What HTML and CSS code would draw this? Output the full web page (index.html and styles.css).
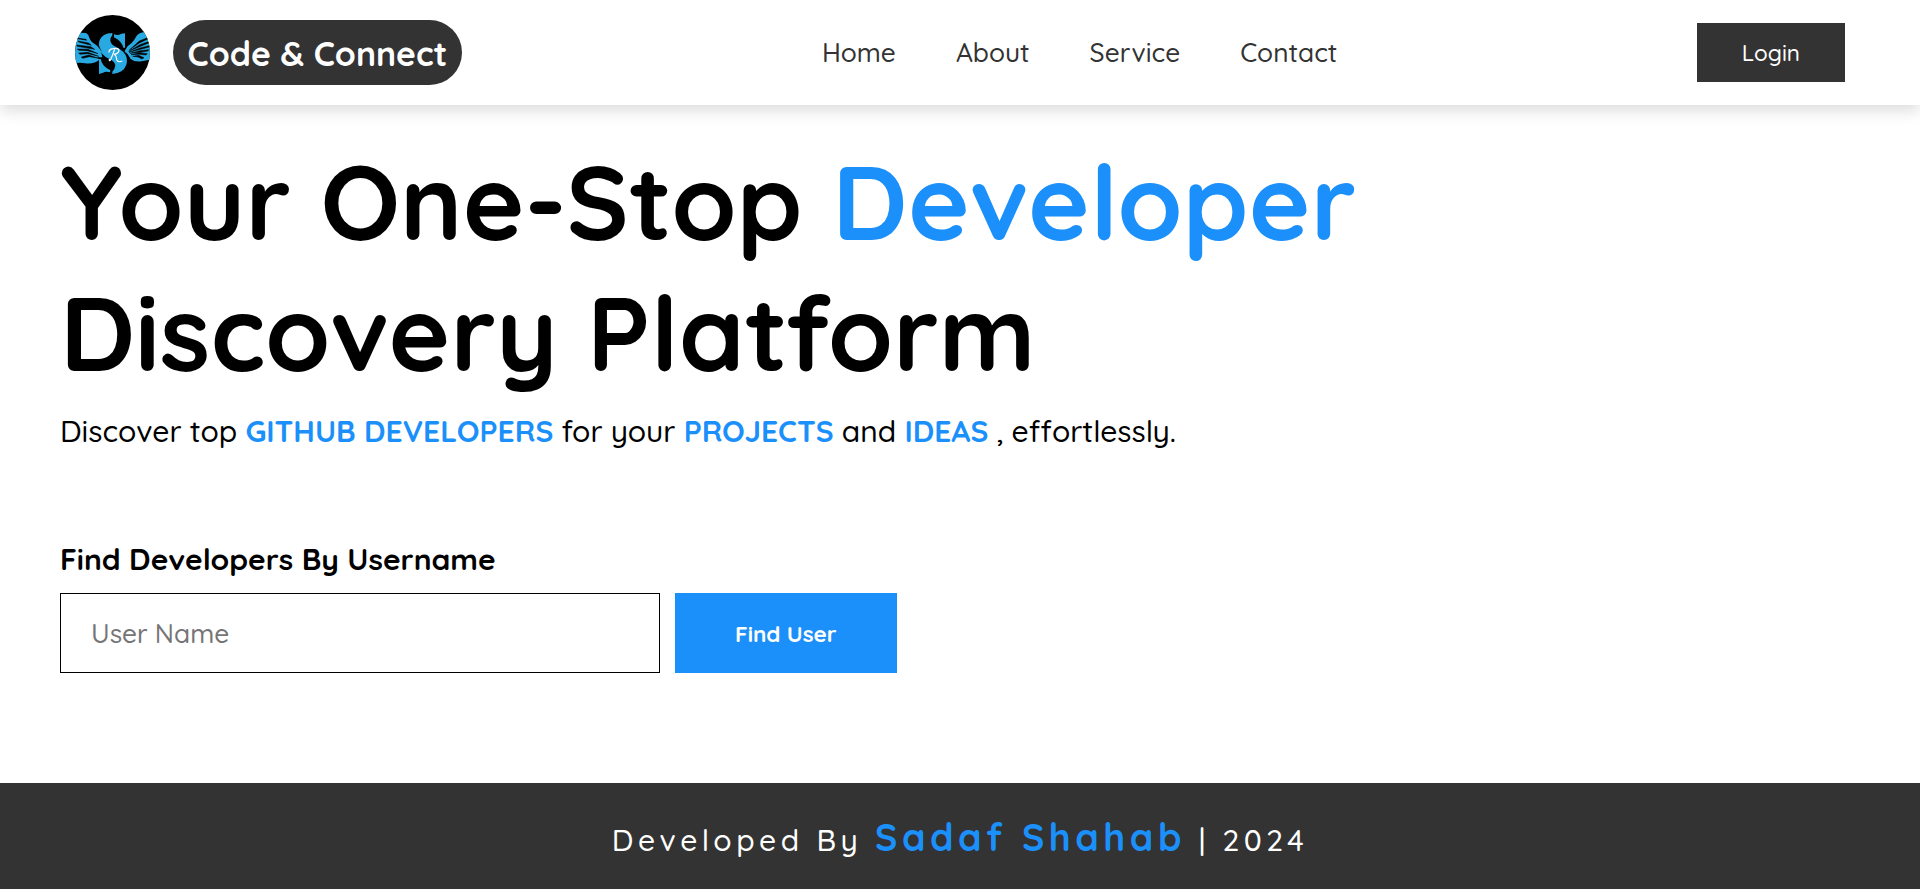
FILE: index.html
```html
<!DOCTYPE html>
<html lang="en">
<head>
<meta charset="utf-8">
<title>Code &amp; Connect</title>
<link rel="stylesheet" href="styles.css">
</head>
<body>
<header class="header">
  <div class="brand">
    <svg class="brand-logo" viewBox="45 44 225 225" aria-hidden="true">
      <defs><clipPath id="disc"><circle cx="157.500" cy="156.500" r="112.500"/></clipPath></defs>
      <g clip-path="url(#disc)">
        <rect x="45" y="44" width="225" height="225" fill="#000"/>
        <g fill="#29a9e1">
          <path d="M44 100 L62 97 L78 98 Q86 102 88 112 Q92 124 106 132 Q118 140 123 153 L127 171 L112 171 L118 179 L106 186 Q92 191 76 189 L60 187 L44 189Z"/>
          <path d="M271 97 L250 96 Q236 98 229 108 Q224 119 214 129 Q202 136 196 148 L194 154 L202 160 L206 166 L212 176 Q224 186 245 183 L271 178Z"/>
          <path d="M157 98 L157 105 Q151 111 151 121 Q153 133 170 141 Q194 153 200 172 Q205 197 184 213 Q174 220 157 221 L157 214 Q165 206 166 195 Q164 183 148 176 Q122 163 117 142 Q113 116 132 104 Q142 98 157 98Z"/>
          <path d="M162 102 Q174 107 184 100 L195 99 L195 142 L190 142 Q185 123 166 113 L162 111Z"/>
          <path d="M117 176 L122 176 Q126 195 143 205 L151 209 L150 216 Q137 212 129 217 L117 221Z"/>
        </g>
        <path d="M52 113L78 117L80 120L52 115ZM54 122L86 128L94 135L56 125ZM50 134L92 139L104 147L52 138ZM52 146L84 147L114 160L82 151L56 150ZM56 158L84 156L116 168L84 160L60 162ZM64 170L86 164L116 174L88 169L68 174Z" fill="#000" stroke="#000" stroke-width="1.500"/>
        <path d="M268 110L238 122L208 149L238 128L268 114ZM268 123L240 133L206 153L242 138L268 127ZM268 136L240 143L207 156L242 147L268 140ZM266 148L240 151L210 159L240 156L264 152ZM262 160L238 157L213 163L238 162L258 164ZM252 172L236 165L218 168L234 170L246 176Z" fill="#000" stroke="#000" stroke-width="1.500"/>
        <path d="M112 120L119 141L126 156L114 138L98 124Z" fill="#000"/>
        <path d="M147 157Q146 147 159 145Q175 142 177 150Q176 160 162 162M164 146Q158 166 151 180Q147 184 148 176M162 162Q169 165 170 178Q174 188 187 182" fill="none" stroke="#fff" stroke-width="3.500"/>
      </g>
    </svg>
    <span class="brand-name">Code &amp; Connect</span>
  </div>
  <nav class="nav">
    <a>Home</a>
    <a>About</a>
    <a>Service</a>
    <a>Contact</a>
  </nav>
  <button class="login">Login</button>
</header>
<main class="hero">
  <h1 class="title">Your One-Stop <span class="accent">Developer</span><br>Discovery Platform</h1>
  <p class="lead">Discover top <b class="accent">GITHUB DEVELOPERS</b> for your <b class="accent">PROJECTS</b> and <b class="accent">IDEAS</b> , effortlessly.</p>
  <form class="search">
    <label class="search-label" for="username">Find Developers By Username</label>
    <div class="search-row">
      <input class="search-input" id="username" type="text" placeholder="User Name">
      <button class="search-button" type="button">Find User</button>
    </div>
  </form>
</main>
<footer class="footer">Developed By <span class="author">Sadaf Shahab</span> | 2024</footer>
</body>
</html>
```
FILE: styles.css
```css
* {
  box-sizing: border-box;
  margin: 0;
  padding: 0;
  font-family: Quicksand, Lato, sans-serif;
}

html {
  font-size: 15px;
}

body {
  display: flex;
  flex-direction: column;
  height: 100vh;
  overflow: hidden;
  background: #fff;
  color: #000;
  line-height: 1.25;
}

.header {
  display: flex;
  flex: none;
  align-items: center;
  justify-content: space-between;
  height: 105px;
  padding: 0 5rem;
  box-shadow: 0 5px 15px rgba(0, 0, 0, 0.15);
}

.brand {
  display: flex;
  align-items: center;
  gap: 1.5rem;
}

.brand-logo {
  display: block;
  width: 75px;
  height: 75px;
}

.brand-name {
  padding: 12px 1rem 11px;
  border-radius: 2.2rem;
  background: #333;
  color: #fff;
  font-size: 2.25rem;
  font-weight: 700;
}

.nav {
  display: flex;
  gap: 4rem;
  padding-top: 2px;
  color: #333;
  font-size: 1.75rem;
  font-weight: 500;
}

.login {
  height: 59px;
  padding: 0 3rem;
  border: 0;
  background: #333;
  color: #fff;
  font-size: 1.5rem;
  font-weight: 500;
}

.hero {
  flex: 1;
  padding: 2rem 4rem 0;
}

.title {
  font-size: 7rem;
  font-weight: 700;
}

.accent {
  color: #1b90fb;
}

.lead {
  margin-top: 1rem;
  font-size: 2rem;
  font-weight: 500;
}

.search {
  margin-top: 91px;
}

.search-label {
  display: block;
  margin-bottom: 14px;
  font-size: 2rem;
  font-weight: 700;
}

.search-row {
  display: flex;
  gap: 1rem;
  height: 80px;
}

.search-input {
  width: 600px;
  padding: 2px 2rem 0;
  border: 1px solid #000;
  font-size: 1.75rem;
  font-weight: 500;
}

.search-button {
  padding: 1px 4rem 0;
  border: 0;
  background: #1b90fb;
  color: #fff;
  font-size: 1.5rem;
  font-weight: 700;
}

.footer {
  flex: none;
  height: 106px;
  padding-top: 31px;
  background: #333;
  color: #fff;
  font-size: 2rem;
  font-weight: 500;
  letter-spacing: 0.3rem;
  text-align: center;
}

.author {
  color: #1b90fb;
  font-size: 2.5rem;
  font-weight: 700;
}
```
